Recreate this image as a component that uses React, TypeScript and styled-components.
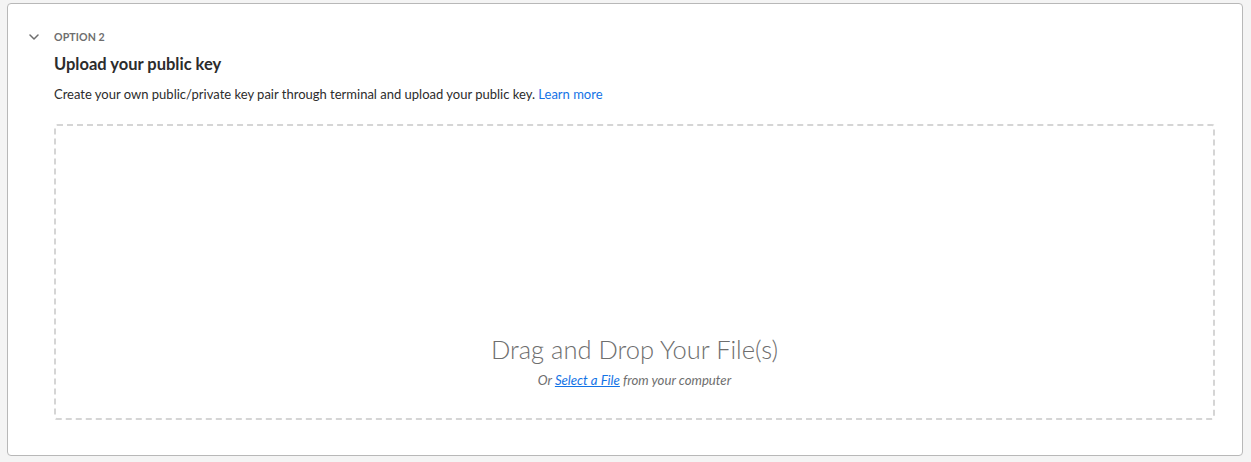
import React from "react";
import styled, { createGlobalStyle } from "styled-components";

const Global = createGlobalStyle`
  html, body { margin: 0; padding: 0; background: #f4f4f4; }
  body { font-family: "Lato", "Open Sans", sans-serif; }
`;

const Page = styled.div`
  padding: 3px 8px 6px 7px;
  box-sizing: border-box;
  height: 462px;
`;

const Card = styled.section`
  height: 100%;
  box-sizing: border-box;
  background: #fff;
  border: 1px solid #b8b8b8;
  border-radius: 4px;
  display: grid;
  grid-template-columns: 46px 1fr;
  padding: 25px 27px 35px 0;
`;

const ChevronCell = styled.div`
  display: flex;
  justify-content: flex-end;
  padding-right: 15px;
  padding-top: 5px;
`;

const Content = styled.div`
  display: flex;
  flex-direction: column;
  min-width: 0;
`;

const Eyebrow = styled.div`
  font-size: 10.6px;
  font-weight: 700;
  color: #6e6e6e;
  letter-spacing: 0.1px;
  line-height: 16px;
  text-transform: uppercase;
`;

const Title = styled.h3`
  margin: 9px 0 0;
  font-size: 16.5px;
  font-weight: 700;
  color: #2c2c2c;
  line-height: 20px;
`;

const Desc = styled.p`
  margin: 10px 0 0;
  font-size: 13px;
  color: #2c2c2c;
  line-height: 20px;
`;

const Link = styled.a`
  color: #1473e6;
  text-decoration: none;
`;

const DropZone = styled.div`
  margin-top: 20px;
  flex: 1;
  border: 2px dashed #d5d5d5;
  border-radius: 3px;
  display: flex;
  flex-direction: column;
  align-items: center;
  justify-content: flex-end;
  padding-bottom: 30px;
`;

const DropTitle = styled.div`
  font-size: 25.5px;
  font-weight: 300;
  color: #6e6e6e;
  line-height: 32px;
`;

const DropSub = styled.div`
  margin-top: 7px;
  font-size: 13.2px;
  font-style: italic;
  color: #6e6e6e;
  line-height: 16px;
`;

const SubLink = styled.a`
  color: #1473e6;
  text-decoration: underline;
`;

export default function App() {
  return (
    <>
      <Global />
      <Page>
        <Card>
          <ChevronCell>
            <svg width="10" height="6" viewBox="0 0 10 6" fill="none">
              <path d="M1 1l4 4 4-4" stroke="#6e6e6e" strokeWidth="1.5" strokeLinecap="round" strokeLinejoin="round" />
            </svg>
          </ChevronCell>
          <Content>
            <Eyebrow>Option 2</Eyebrow>
            <Title>Upload your public key</Title>
            <Desc>
              Create your own public/private key pair through terminal and upload your public key.{" "}
              <Link href="#">Learn more</Link>
            </Desc>
            <DropZone>
              <DropTitle>Drag and Drop Your File(s)</DropTitle>
              <DropSub>
                Or <SubLink href="#">Select a File</SubLink> from your computer
              </DropSub>
            </DropZone>
          </Content>
        </Card>
      </Page>
    </>
  );
}
